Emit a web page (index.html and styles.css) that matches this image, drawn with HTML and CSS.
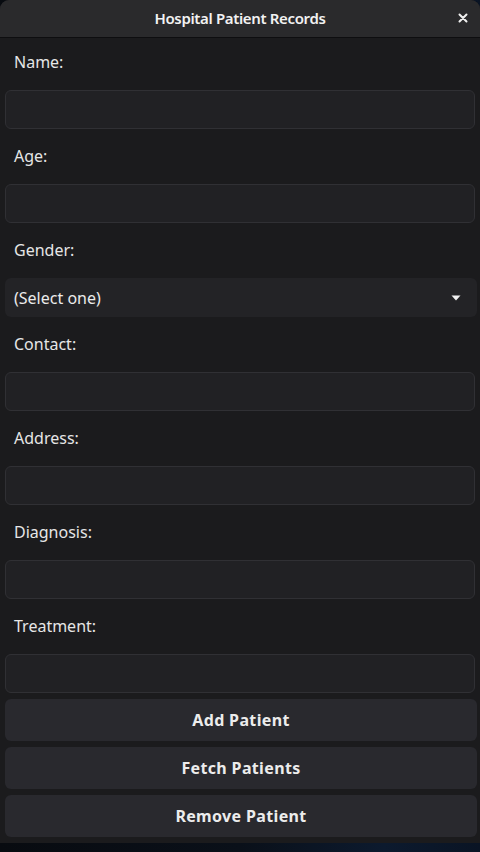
FILE: index.html
```html
<!DOCTYPE html>
<html>
<head>
<meta charset="utf-8">
<link rel="stylesheet" href="styles.css">
</head>
<body>
<div class="window">
  <header class="headerbar">
    <span class="title">Hospital Patient Records</span>
    <button class="close" aria-label="Close">
      <svg width="10" height="10" viewBox="0 0 10 10"><path d="M1.5 1.5 L8.5 8.5 M8.5 1.5 L1.5 8.5" stroke="#f0f0f0" stroke-width="2" stroke-linecap="round"/></svg>
    </button>
  </header>
  <main class="content">
    <label class="label first">Name:</label>
    <div class="entry"></div>
    <label class="label">Age:</label>
    <div class="entry"></div>
    <label class="label">Gender:</label>
    <div class="combo">
      <span>(Select one)</span>
      <svg width="10" height="6" viewBox="0 0 10 6"><path d="M0.5 0.5 H9.5 L5 5.5 Z" fill="#f0f0f0"/></svg>
    </div>
    <label class="label">Contact:</label>
    <div class="entry"></div>
    <label class="label">Address:</label>
    <div class="entry"></div>
    <label class="label">Diagnosis:</label>
    <div class="entry"></div>
    <label class="label">Treatment:</label>
    <div class="entry"></div>
    <div class="buttons">
      <button class="btn">Add Patient</button>
      <button class="btn">Fetch Patients</button>
      <button class="btn">Remove Patient</button>
    </div>
  </main>
</div>
</body>
</html>
```

FILE: styles.css
```css
* { box-sizing: border-box; }
html, body {
  margin: 0;
  padding: 0;
  width: 480px;
  height: 852px;
  overflow: hidden;
}
body {
  background: linear-gradient(90deg, #080b10 0%, #0a1019 50%, #0c1a2e 80%, #0a1424 100%);
  font-family: "Noto Sans", "Open Sans", sans-serif;
  color: #e8e8e8;
}
.window {
  width: 480px;
  height: 843px;
  background: #1b1b1d;
  border-radius: 9px 9px 0 0;
  display: flex;
  flex-direction: column;
  overflow: hidden;
}
.headerbar {
  height: 38px;
  flex: none;
  background: #2a2a2c;
  border-bottom: 1px solid #0e0e10;
  display: flex;
  align-items: center;
  justify-content: center;
  position: relative;
  padding-bottom: 2px;
}
.title {
  font-size: 15px;
  font-weight: 600;
  color: #f2f2f2;
  letter-spacing: -0.35px;
}
.close {
  position: absolute;
  right: 12px;
  top: 13px;
  width: 10px;
  height: 10px;
  padding: 0;
  border: none;
  background: none;
  display: flex;
}
.content {
  display: flex;
  flex-direction: column;
  padding: 0 5px 6px 5px;
}
.label {
  display: block;
  font-size: 16px;
  line-height: 20px;
  padding: 17px 9px 18px 9px;
  color: #e6e6e6;
}
.label.first { padding-top: 14px; }
.entry {
  height: 39px;
  width: 470px;
  background: #212124;
  border: 1px solid #303034;
  border-radius: 6px;
}
.combo {
  height: 39px;
  width: 472px;
  background: #232326;
  border-radius: 6px;
  display: flex;
  align-items: center;
  justify-content: space-between;
  padding: 0 16px 0 9px;
  font-size: 16px;
  color: #ebebeb;
}
.buttons {
  display: flex;
  flex-direction: column;
  gap: 6px;
  margin-top: 6px;
}
.btn {
  height: 42px;
  width: 472px;
  border: none;
  border-radius: 6px;
  background: #29292e;
  color: #ececec;
  font-family: "Noto Sans", "Open Sans", sans-serif;
  font-size: 16px;
  font-weight: 700;
  letter-spacing: 0.35px;
  padding: 0;
}
```
